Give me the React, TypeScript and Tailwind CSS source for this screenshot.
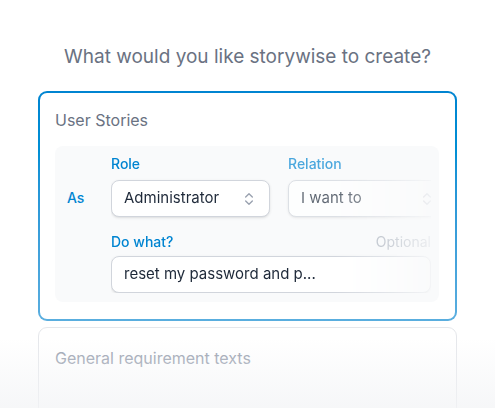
import { ChevronsUpDown } from "lucide-react";

function SelectBox({ value, className }: { value: string; className?: string }) {
  return (
    <div
      className={
        "flex h-[37px] items-center justify-between rounded-lg border border-gray-300 bg-white pl-3 pr-3 shadow-sm " +
        (className ?? "")
      }
    >
      <span className="text-[15px] text-gray-800">{value}</span>
      <ChevronsUpDown className="h-4 w-4 text-gray-400" strokeWidth={2} />
    </div>
  );
}

export default function App() {
  return (
    <div
      className="relative h-[408px] w-[495px] overflow-hidden bg-white"
      style={{ fontFamily: "Inter, 'Noto Sans', sans-serif" }}
    >
      <div className="flex flex-col items-center pt-[44px]">
        <h1 className="text-[19px] leading-[26px] text-gray-500">
          What would you like storywise to create?
        </h1>

        {/* User stories card */}
        <div className="mt-[21px] w-[419px] rounded-[9px] bg-gradient-to-b from-sky-600 to-[#5aaedf] p-[2px]">
          <div className="rounded-[7px] bg-white pl-[15px] pr-4 pb-[17px] pt-[16px]">
            <h2 className="text-[16px] leading-[22px] text-gray-500">User Stories</h2>
            <div className="mt-[15px] flex rounded-lg bg-gray-50 pb-[9px] pl-3 pt-[9px]">
              <div className="w-[44px] pt-[32px] text-[14px] font-medium text-sky-600">As</div>
              <div className="mr-2 flex-1 overflow-hidden [mask-image:linear-gradient(to_right,black_70%,rgba(0,0,0,0.55)_88%,rgba(0,0,0,0.15)_100%)]">
                <div className="flex gap-[18px]">
                  <div className="w-[159px] shrink-0">
                    <div className="mb-[7px] text-[14px] font-medium leading-[18px] text-sky-600">Role</div>
                    <SelectBox value="Administrator" />
                  </div>
                  <div className="w-[160px] shrink-0 opacity-70">
                    <div className="mb-[7px] text-[14px] font-medium leading-[18px] text-sky-600">Relation</div>
                    <SelectBox value="I want to" />
                  </div>
                </div>
                <div className="mt-[16px] flex items-center justify-between">
                  <div className="text-[14px] font-medium leading-[18px] text-sky-600">Do what?</div>
                  <div className="text-[14px] leading-[18px] text-gray-400/80">Optional</div>
                </div>
                <div className="mt-[5px] flex h-[37px] w-full items-center rounded-lg border border-gray-300 bg-white px-3 shadow-sm">
                  <span className="text-[15px] text-gray-800">reset my password and p...</span>
                </div>
              </div>
            </div>
          </div>
        </div>

        {/* General requirement card */}
        <div className="mt-[6px] h-[120px] w-[419px] rounded-[9px] border border-gray-200 bg-white pl-[16px] pr-4 pt-[19px]">
          <h2 className="text-[16px] leading-[22px] text-gray-400">General requirement texts</h2>
        </div>
      </div>

      {/* bottom fade */}
      <div className="pointer-events-none absolute inset-x-0 bottom-0 h-[70px] bg-gradient-to-b from-white/0 to-[#f3f4f6]/75" />
    </div>
  );
}
